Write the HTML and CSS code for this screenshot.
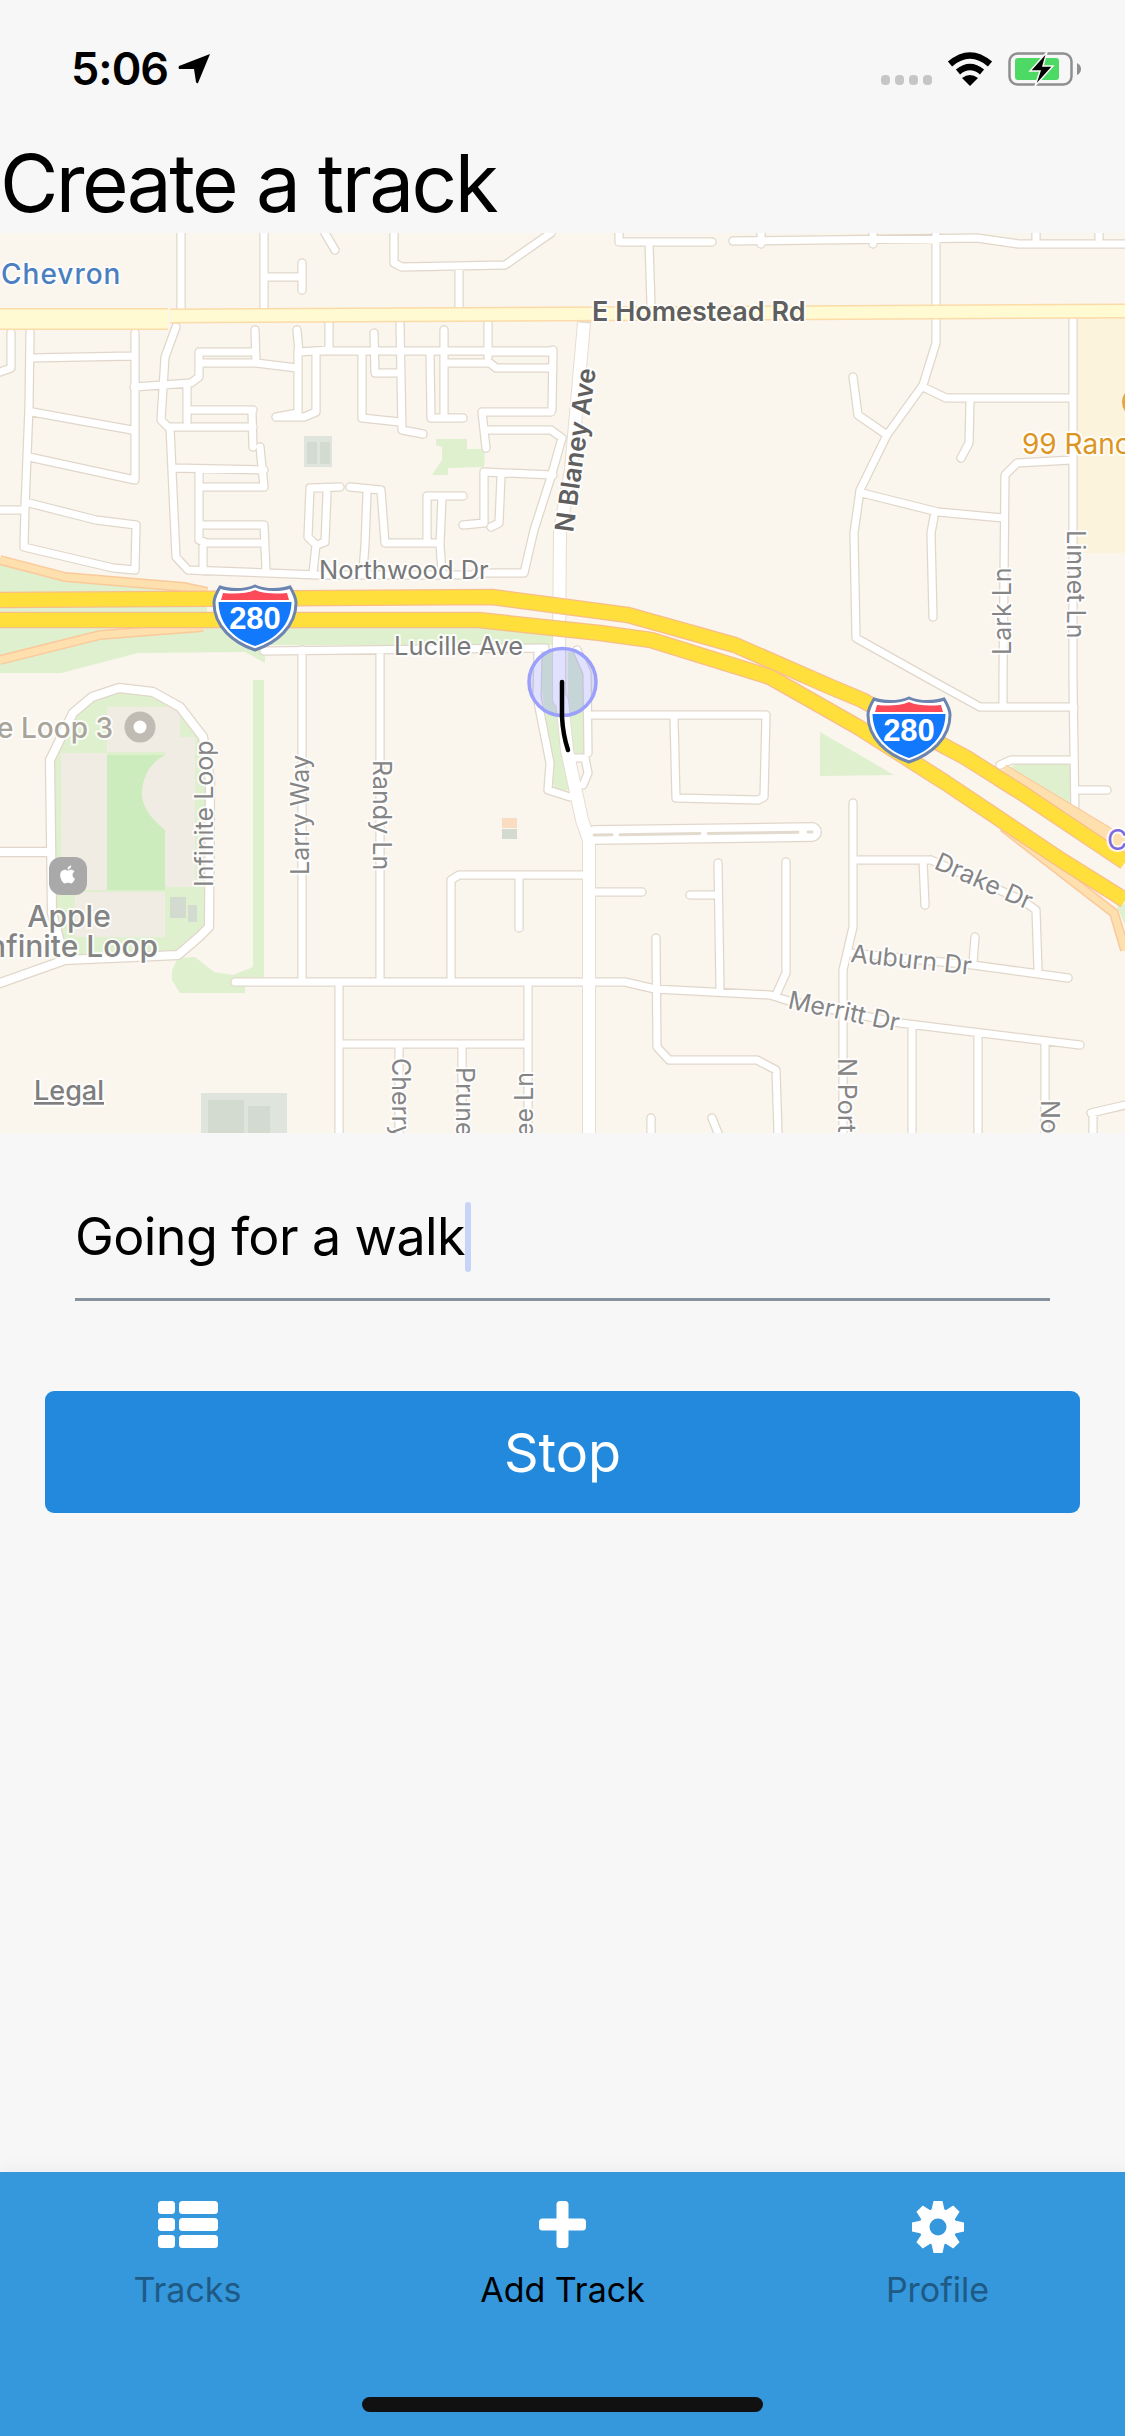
FILE: index.html
```html
<!DOCTYPE html>
<html lang="en">
<head>
    <meta charset="UTF-8">
    <meta name="viewport" content="width=device-width, initial-scale=1.0">
    <title>Create a track</title>
    <link rel="stylesheet" href="styles.css">
</head>
<body>
    <div class="screen">
        <!-- Status bar -->
        <div class="status-bar">
            <div class="status-left">
                <span class="time">5:06</span>
                <svg class="location" width="32" height="30" viewBox="0 0 32 30">
                    <path d="M32 0 L20 29 Q19 30 18 28 L16 15 L1 15 Q0 13 1 12 Z"/>
                </svg>
            </div>
            <div class="status-right">
                <div class="signal"><i></i><i></i><i></i><i></i></div>
                <svg class="wifi" width="46" height="34" viewBox="0 0 46 34">
                    <path class="wifi-arc" d="M3 12 Q23 -5 43 12"/>
                    <path class="wifi-arc" d="M11 20 Q23 10 35 20"/>
                    <path d="M15 26 Q23 20 31 26 L23 34 Z"/>
                </svg>
                <svg class="battery" width="74" height="34" viewBox="0 0 74 34">
                    <rect class="battery-case" x="1.500" y="1.500" width="62" height="31" rx="8"/>
                    <rect class="battery-level" x="7" y="6" width="44" height="22" rx="3"/>
                    <path class="battery-cap" d="M69 11 Q73 13 73 17 Q73 21 69 23 Z"/>
                    <path class="battery-bolt" d="M39 0 L22 19 L32 19 L27 34 L45 14 L35 14 Z"/>
                </svg>
            </div>
        </div>

        <h1 class="title">Create a track</h1>

        <!-- Map -->
        <svg class="map" width="1125" height="900" viewBox="0 233 1125 900">
            <defs>
                <path id="minorRoads" d="M181 233V310 M264 233V311 M264 277H302 M302 263V290 M325 233L335 250 M394 233V263L402 267L505 265L551 233 M459 267V310
                    M11 333V368L0 372 M30 332L29 407L27 457L25 507L24 547 M30 358L133 356 M135 333V478 M32 412L132 430 M29 457L135 480
                    M25 502L96 520L136 525L135 570L113 568L24 547 M0 510H23 M176 327L165 357L161 420L168 427H253
                    M134 387L191 383L199 377V352H254 M255 330L256 363L297 368 M199 363H256 M297 330L299 352L329 350 M329 323V347
                    M298 350V413L276 417 M316 353V412L304 417H276 M316 351H553 M362 353V418L400 422 M374 333L375 373H400 M400 323L402 430L423 434
                    M430 353L431 418H463 M444 330V418 M444 363H490L496 368H553 M488 323V357 M492 352H553 M553 350L552 410 M482 412H551 M482 412L486 448
                    M484 430H551L562 438 M562 438L551 477L534 530L524 573H475 M484 472L553 475 M484 472V523L463 525 M501 477L499 523L491 527
                    M170 427L176 557L188 570L318 575H475 M174 468L264 470 M260 447L264 487H199V540L207 543H264 M199 473V487 M199 525H264L266 570 M203 547V571
                    M252 412L253 447 M188 410H253 M187 387V421
                    M340 487L310 488L308 537L316 545L313 573 M327 493L325 542L317 545 M350 487L381 490L385 543H437 M367 493L365 545L363 570
                    M427 496H463 M427 496V543 M442 497L440 545L442 572
                    M619 233V242H712 M649 242L651 305 M733 241L977 238L1019 244H1125 M761 233V244 M873 233V244 M1036 233V244 M1099 233V244
                    M936 233V343L923 385L887 435L860 490L854 533L856 638L931 680L980 707H1074 M853 377L858 415L887 435 M923 387L946 398H1072 M1073 318V680L1075 817
                    M1076 790H1107 M1000 765L1011 760H1074 M1003 680V707 M970 402L969 443L961 458 M1072 460L1017 463L1005 475L1003 680
                    M862 493L938 512L1003 518 M934 517L931 533L933 617
                    M264 651L545 648 M302 650V982 M380 650V982 M235 982H625L655 989L770 995L789 1001L900 1023L1080 1045
                    M339 982V1133 M528 982V1133 M339 1044H528 M399 1044V1133 M462 1044V1133 M451 982V880L459 875H588 M519 877V928
                    M592 715H766L764 797L758 800L676 798L674 717 M525 875H588 M596 892H642 M718 863L720 990 M690 895H716 M786 862V973L776 995
                    M656 938L657 1047L669 1060H757L776 1070L778 1133 M853 803V927L843 970V1133 M854 860H931 M923 860L925 905 M931 860L1022 900L1036 910L1038 970
                    M850 953L973 965L1068 978 M975 937L973 963 M912 1027V1133 M978 1033V1133 M1045 1042V1133 M651 1118V1133 M712 1118L718 1133
                    M1125 1105L1091 1113 M1093 1113V1133
                    M538 652L537 697L550 763L548 790L570 797 M577 650L587 673L588 753 M570 758H585L588 773L583 785"/>
                <path id="ringRoad" d="M0 983L65 960L178 955L199 937L209 927L210 780L203 737L180 707L153 692L119 688L92 697L73 713L50 760L52 913L65 960 M0 852H50"/>
                <path id="majorRoads" d="M584 323L571 470L560 530L559 650V700L562 700L567 750L582 820L589 840V1133"/>
                <path id="dividedRoad" d="M594 835L812 832"/>
                <path id="bandOne" d="M0 600L492 597L628 615L735 645L831 687L862 700L946 747L965 757L1022 793L1125 862"/>
                <path id="bandTwo" d="M0 620H478L600 633L651 640L770 677L858 727L946 783L1061 860L1125 900"/>
                <path id="rampOne" d="M0 560L65 577L184 587L207 592"/>
                <path id="rampTwo" d="M0 660L100 635L203 627"/>
                <path id="rampThree" d="M1003 827L1114 913L1125 950"/>
                <path id="rampFour" d="M1000 775L1125 850"/>

                <g id="shield">
                    <path class="shield-edge" d="M6 2C14 5 30 6 41 1C52 6 68 5 76 2C79 7 82 12 82 18C82 42 62 58 41 65C20 58 0 42 0 18C0 12 3 7 6 2Z"/>
                    <path class="shield-red" d="M7 15L9 8C20 9 32 9 41 5C50 9 62 9 73 8L75 15Z"/>
                    <path class="shield-blue" d="M4.500 17H77.500C77 41 60 55 41 61C22 55 5 41 4.500 17Z"/>
                    <text class="shield-text" x="41" y="44">280</text>
                </g>
            </defs>

            <rect class="map-land" x="0" y="233" width="1125" height="900"/>
            <rect class="map-mall" x="1078" y="318" width="47" height="235"/>

            <!-- Parks and buildings -->
            <path class="map-park" d="M0 563L65 580L207 590V628H555V645H265V663L245 652L138 653L61 673H0Z"/>
            <path class="map-park" d="M436 439H467V449H485L484 467L448 468V475H432L442 460V447L436 445Z"/>
            <path class="map-park" d="M820 732V776L894 775Z"/>
            <path class="map-park" d="M994 775L1019 763H1070V815L1040 800Z"/>
            <path class="map-park" d="M1110 890L1125 905V925Z"/>
            <path class="map-park" d="M538 652H553L563 747L571 790H555L548 763L545 713Z"/>
            <path class="map-park" d="M568 652H580L587 677L585 755H572L568 730Z"/>
            <path class="map-park" d="M172 970L178 958L195 957L214 972L233 975L253 967V680H264V977H245V993H180L172 980Z"/>
            <path class="map-park" d="M50 760L73 713L92 697L119 688L153 692L180 707L203 737L210 780L209 927L199 937L178 955L60 958L52 913Z"/>
            <rect class="map-lawn" x="107" y="755" width="58" height="135"/>
            <rect class="map-campus" x="61" y="753" width="46" height="137"/>
            <rect class="map-campus" x="107" y="707" width="73" height="45"/>
            <path class="map-campus" d="M165 737H195V887H165V830Q140 810 142 790Q145 765 165 755Z"/>
            <rect class="map-campus" x="134" y="892" width="31" height="45"/>
            <rect class="map-campus" x="75" y="892" width="59" height="45"/>
            <rect class="map-block" x="170" y="897" width="16" height="21"/>
            <rect class="map-block" x="188" y="905" width="9" height="17"/>
            <rect class="map-block-light" x="304" y="436" width="28" height="31"/>
            <rect class="map-block" x="307" y="442" width="10" height="22"/>
            <rect class="map-block" x="320" y="442" width="10" height="22"/>
            <rect class="map-block-light" x="201" y="1093" width="86" height="40"/>
            <rect class="map-block" x="208" y="1100" width="36" height="33"/>
            <rect class="map-block" x="248" y="1106" width="22" height="27"/>
            <rect class="map-peach" x="502" y="818" width="15" height="10"/>
            <rect class="map-block" x="502" y="829" width="15" height="10"/>

            <!-- Streets -->
            <use href="#minorRoads" class="road-case"/>
            <use href="#ringRoad" class="road-case-ring"/>
            <use href="#majorRoads" class="road-case-major"/>
            <use href="#dividedRoad" class="road-case-divided"/>
            <use href="#minorRoads" class="road-fill"/>
            <use href="#ringRoad" class="road-fill-ring"/>
            <use href="#majorRoads" class="road-fill-major"/>
            <use href="#dividedRoad" class="road-fill-divided"/>
            <use href="#dividedRoad" class="road-median"/>

            <!-- Highways -->
            <path class="homestead-case" d="M0 319H168"/>
            <path class="homestead-case-thin" d="M170 316L1125 311"/>
            <path class="homestead-fill" d="M0 319H168"/>
            <path class="homestead-fill-thin" d="M170 316L1125 311"/>
            <use href="#rampOne" class="ramp-case"/>
            <use href="#rampTwo" class="ramp-case"/>
            <use href="#rampThree" class="ramp-case"/>
            <use href="#rampFour" class="ramp-case-wide"/>
            <use href="#rampOne" class="ramp-fill"/>
            <use href="#rampTwo" class="ramp-fill"/>
            <use href="#rampThree" class="ramp-fill"/>
            <use href="#rampFour" class="ramp-fill-wide"/>
            <use href="#bandOne" class="freeway-case"/>
            <use href="#bandTwo" class="freeway-case"/>
            <use href="#bandOne" class="freeway-fill"/>
            <use href="#bandTwo" class="freeway-fill"/>

            <use href="#shield" transform="translate(214 585)"/>
            <use href="#shield" transform="translate(868 697)"/>

            <!-- Points of interest -->
            <circle class="poi-gray" cx="140" cy="727" r="15.500"/>
            <circle class="poi-hole" cx="140" cy="727" r="6.500"/>
            <rect class="poi-apple-box" x="49" y="857" width="38" height="38" rx="12"/>
            <path class="poi-hole" transform="translate(57.500 864) scale(0.880)" d="M17.050 12.540c-.03-2.600 2.120-3.850 2.220-3.910-1.210-1.770-3.090-2.010-3.760-2.040-1.600-.16-3.120.94-3.930.94-.81 0-2.060-.92-3.390-.89-1.740.03-3.350 1.010-4.250 2.570-1.810 3.140-.46 7.790 1.300 10.340.86 1.250 1.890 2.650 3.240 2.600 1.300-.05 1.790-.84 3.360-.84 1.570 0 2.010.84 3.390.81 1.400-.02 2.290-1.270 3.140-2.530.99-1.450 1.400-2.860 1.420-2.930-.03-.01-2.720-1.040-2.740-4.120zM14.460 4.900c.72-.87 1.200-2.080 1.070-3.280-1.030.04-2.280.69-3.020 1.550-.66.77-1.240 2-1.090 3.180 1.150.09 2.320-.58 3.040-1.450z"/>
            <circle class="poi-orange" cx="1138" cy="402" r="16"/>

            <!-- Labels -->
            <text class="label label-chevron" x="1" y="284">Chevron</text>
            <text class="label label-main" x="592" y="321">E Homestead Rd</text>
            <text class="label label-blaney" transform="translate(573 533) rotate(-82)">N Blaney Ave</text>
            <text class="label label-street" x="319" y="579">Northwood Dr</text>
            <text class="label label-street" x="394" y="655">Lucille Ave</text>
            <text class="label label-mall" x="1022" y="454">99 Ranch</text>
            <text class="label label-side" transform="translate(1011 655) rotate(-90)">Lark Ln</text>
            <text class="label label-side" transform="translate(1067 530) rotate(90)">Linnet Ln</text>
            <text class="label label-campus" x="113" y="738">Infinite Loop 3</text>
            <text class="label label-side" transform="translate(213 887) rotate(-90)">Infinite Loop</text>
            <text class="label label-side" transform="translate(309 875) rotate(-90)">Larry Way</text>
            <text class="label label-side" transform="translate(373 760) rotate(90)">Randy Ln</text>
            <text class="label label-apple" x="69" y="927">Apple</text>
            <text class="label label-apple" x="69" y="957">Infinite Loop</text>
            <text class="label label-legal" x="34" y="1100">Legal</text>
            <text class="label label-side" transform="translate(392 1058) rotate(90)">Cherry Ln</text>
            <text class="label label-side" transform="translate(456 1067) rotate(90)">Prune Ln</text>
            <text class="label label-side label-end" transform="translate(533 1072) rotate(-90)">Lee Ln</text>
            <text class="label label-side" transform="translate(838 1058) rotate(90)">N Portal Ave</text>
            <text class="label label-side" transform="translate(1041 1100) rotate(90)">Norwich Ave</text>
            <text class="label label-side" transform="translate(933 868) rotate(24)">Drake Dr</text>
            <text class="label label-side" transform="translate(850 962) rotate(6)">Auburn Dr</text>
            <text class="label label-side" transform="translate(787 1008) rotate(12)">Merritt Dr</text>
            <text class="label label-purple" x="1107" y="850">Cupertino</text>

            <!-- User location and track -->
            <circle class="user-dot" cx="562.500" cy="682" r="33.500"/>
            <path class="user-track" d="M562 682V717Q563 735 568 750"/>
        </svg>

        <!-- Track form -->
        <div class="track-form">
            <div class="name-input">Going for a walk<span class="caret"></span></div>
            <button class="stop-button" type="button">Stop</button>
        </div>

        <!-- Bottom tabs -->
        <div class="tab-bar">
            <div class="tabs">
                <div class="tab">
                    <svg class="tab-icon" width="60" height="52" viewBox="0 0 60 52">
                        <rect x="0" y="0" width="17" height="13" rx="3.500"/>
                        <rect x="21" y="0" width="39" height="13" rx="3.500"/>
                        <rect x="0" y="17" width="17" height="13" rx="3.500"/>
                        <rect x="21" y="17" width="39" height="13" rx="3.500"/>
                        <rect x="0" y="34" width="17" height="13" rx="3.500"/>
                        <rect x="21" y="34" width="39" height="13" rx="3.500"/>
                    </svg>
                    <span class="tab-label">Tracks</span>
                </div>
                <div class="tab tab-active">
                    <svg class="tab-icon" width="47" height="52" viewBox="0 0 47 52">
                        <rect x="17.500" y="0" width="12" height="47" rx="3.500"/>
                        <rect x="0" y="17.500" width="47" height="12" rx="3.500"/>
                    </svg>
                    <span class="tab-label">Add Track</span>
                </div>
                <div class="tab">
                    <svg class="tab-icon" width="52" height="52" viewBox="-26 -26 52 52">
                        <circle class="gear-ring" cx="0" cy="0" r="13.500"/>
                        <path id="gearTooth" d="M-6.500 -17L-4.500 -26H4.500L6.500 -17Z"/>
                        <use href="#gearTooth" transform="rotate(45)"/>
                        <use href="#gearTooth" transform="rotate(90)"/>
                        <use href="#gearTooth" transform="rotate(135)"/>
                        <use href="#gearTooth" transform="rotate(180)"/>
                        <use href="#gearTooth" transform="rotate(225)"/>
                        <use href="#gearTooth" transform="rotate(270)"/>
                        <use href="#gearTooth" transform="rotate(315)"/>
                    </svg>
                    <span class="tab-label">Profile</span>
                </div>
            </div>
            <div class="home-indicator"></div>
        </div>
    </div>
</body>
</html>
```

FILE: styles.css
```css
/* General */
body {
    margin: 0;
    font-family: Inter, "Liberation Sans", sans-serif;
    background-color: #f7f7f7;
    color: #000;
}

.screen {
    width: 1125px;
    height: 2436px;
    display: flex;
    flex-direction: column;
    overflow: hidden;
}

/* Status bar */
.status-bar {
    display: flex;
    justify-content: space-between;
    align-items: flex-start;
    height: 34px;
    padding: 52px 43px 0 71px;
}

.status-left {
    display: flex;
    align-items: center;
    gap: 10px;
}

.time {
    font-size: 45px;
    font-weight: 600;
    line-height: 34px;
    letter-spacing: -1px;
}

.status-right {
    display: flex;
    align-items: flex-start;
    gap: 15px;
}

.signal {
    display: flex;
    gap: 5px;
    padding-top: 23px;
}

.signal i {
    width: 9px;
    height: 10px;
    border-radius: 4px;
    background-color: #c6c6c6;
}

.wifi-arc {
    fill: none;
    stroke: #000;
    stroke-width: 6.500;
}

.battery-case {
    fill: none;
    stroke: #8f8f8f;
    stroke-width: 2.500;
}

.battery-level {
    fill: #4cd964;
}

.battery-cap {
    fill: #8f8f8f;
}

.battery-bolt {
    fill: #000;
    stroke: #f7f7f7;
    stroke-width: 1.500;
}

/* Title */
.title {
    height: 147px;
    margin: 0;
    display: flex;
    align-items: flex-end;
    font-size: 80px;
    font-weight: 400;
    line-height: 100px;
    letter-spacing: -2.600px;
}

/* Map */
.map {
    display: block;
    flex-shrink: 0;
}

.map-land { fill: #faf5ed; }
.map-mall { fill: #fcf3dc; }
.map-park { fill: #dff0cf; }
.map-lawn { fill: #cdecbd; }
.map-campus { fill: #f0ebe3; }
.map-block { fill: #d3dbd1; }
.map-block-light { fill: #dfe5dc; }
.map-peach { fill: #fadcc2; }

.road-case,
.road-fill,
.road-case-ring,
.road-fill-ring,
.road-case-major,
.road-fill-major,
.road-case-divided,
.road-fill-divided,
.road-median {
    fill: none;
    stroke-linecap: round;
    stroke-linejoin: round;
}

.road-case { stroke: #e0d7ca; stroke-width: 9.500; }
.road-fill { stroke: #fff; stroke-width: 7; }
.road-case-ring { stroke: #e0d7ca; stroke-width: 10.500; }
.road-fill-ring { stroke: #fff; stroke-width: 8; }
.road-case-major { stroke: #e6ddd0; stroke-width: 14; }
.road-fill-major { stroke: #fff; stroke-width: 12; stroke-linecap: butt; }
.road-case-divided { stroke: #e0d7ca; stroke-width: 20; }
.road-fill-divided { stroke: #fff; stroke-width: 17.500; }
.road-median { stroke: #e3dace; stroke-width: 3; stroke-dasharray: 18 8 80 8 90 10; }

.homestead-case,
.homestead-case-thin { fill: none; stroke: #fbdba8; }
.homestead-fill,
.homestead-fill-thin { fill: none; stroke: #fffad2; }
.homestead-case { stroke-width: 22; }
.homestead-fill { stroke-width: 19; }
.homestead-case-thin { stroke-width: 15; }
.homestead-fill-thin { stroke-width: 12; }

.ramp-case,
.ramp-fill,
.ramp-case-wide,
.ramp-fill-wide { fill: none; }
.ramp-case { stroke: #fbc99a; stroke-width: 10; }
.ramp-fill { stroke: #fde0ae; stroke-width: 7; }
.ramp-case-wide { stroke: #fbc99a; stroke-width: 24; }
.ramp-fill-wide { stroke: #fde0ae; stroke-width: 22; }

.freeway-case,
.freeway-fill {
    fill: none;
    stroke-linejoin: round;
}

.freeway-case { stroke: #f9bd8a; stroke-width: 16.500; }
.freeway-fill { stroke: #ffdf3c; stroke-width: 14; }

.shield-edge { fill: #fff; stroke: #6b84b0; stroke-width: 3; }
.shield-red { fill: #fd4a59; }
.shield-blue { fill: #1279fd; }

.shield-text {
    fill: #fff;
    font-family: "Liberation Sans", sans-serif;
    font-size: 31px;
    font-weight: 700;
    text-anchor: middle;
}

.poi-gray { fill: #c0bcb3; }
.poi-hole { fill: #fff; }
.poi-apple-box { fill: #a9a9a9; }
.poi-orange { fill: #e8a33c; }

.label {
    paint-order: stroke;
    stroke: rgba(255, 255, 255, 0.85);
    stroke-width: 4px;
    stroke-linejoin: round;
}

.label-chevron { fill: #4a7fc1; font-size: 28px; letter-spacing: 1px; font-weight: 500; }
.label-main { fill: #5f5f5f; font-size: 27px; font-weight: 600; }
.label-blaney { fill: #5f5f5f; font-size: 26px; font-weight: 600; }
.label-street { fill: #787878; font-size: 25.500px; }
.label-side { fill: #858585; font-size: 25px; }
.label-end { text-anchor: end; }
.label-mall { fill: #dc9520; font-size: 28px; }
.label-campus { fill: #a8a49a; font-size: 28px; text-anchor: end; font-weight: 500; }
.label-apple { fill: #848484; font-size: 30px; font-weight: 500; text-anchor: middle; }
.label-legal { fill: #7e7e7e; font-size: 27px; font-weight: 500; text-decoration: underline; }
.label-purple { fill: #7a6be0; font-size: 28px; }

.user-dot {
    fill: rgba(110, 120, 250, 0.22);
    stroke: #9aa0fb;
    stroke-width: 3.500;
}

.user-track {
    fill: none;
    stroke: #000;
    stroke-width: 4.500;
    stroke-linecap: round;
}

/* Form */
.track-form {
    display: flex;
    flex-direction: column;
    padding: 69px 45px 0 45px;
}

.name-input {
    display: flex;
    align-items: flex-start;
    height: 66px;
    margin: 0 30px;
    padding-bottom: 30px;
    border-bottom: 3px solid #86939e;
    font-size: 52px;
    line-height: 70px;
    letter-spacing: -0.600px;
}

.caret {
    width: 6px;
    height: 70px;
    border-radius: 3px;
    background-color: #c8d4f6;
}

.stop-button {
    height: 122px;
    margin-top: 90px;
    border: none;
    border-radius: 9px;
    background-color: #2289dc;
    color: #fff;
    font-family: inherit;
    font-size: 54px;
}

/* Tabs */
.tab-bar {
    height: 264px;
    margin-top: auto;
    display: flex;
    flex-direction: column;
    align-items: center;
    background-color: #3597dc;
    box-shadow: 0 -6px 14px rgba(0, 0, 0, 0.035);
}

.tabs {
    display: flex;
    width: 100%;
    padding-top: 29px;
}

.tab {
    flex: 1;
    display: flex;
    flex-direction: column;
    align-items: center;
    color: #1f5a85;
}

.tab-active {
    color: #000;
}

.tab-icon {
    fill: #fff;
}

.gear-ring {
    fill: #fff;
    fill-opacity: 0;
    stroke: #fff;
    stroke-width: 10;
}

.tab-label {
    margin-top: 16px;
    font-size: 34px;
    line-height: 42px;
}

.home-indicator {
    width: 401px;
    height: 15px;
    margin-top: auto;
    margin-bottom: 24px;
    border-radius: 8px;
    background-color: #111;
}
```
